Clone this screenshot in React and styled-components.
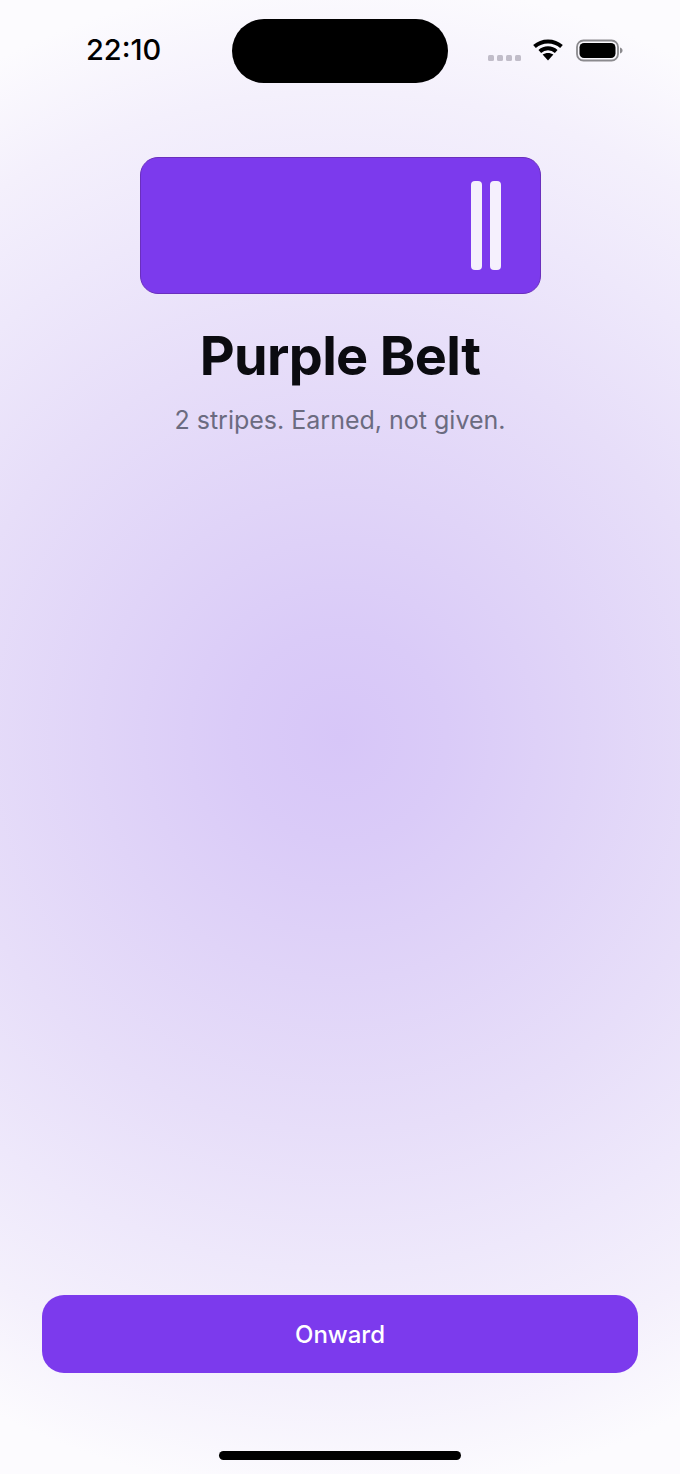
import React from "react";
import styled, { createGlobalStyle } from "styled-components";

const Global = createGlobalStyle`
  html, body { margin: 0; padding: 0; }
  body { font-family: Inter, "Liberation Sans", sans-serif; }
`;

const Screen = styled.div`
  width: 680px;
  height: 1474px;
  overflow: hidden;
  display: flex;
  flex-direction: column;
  align-items: center;
  background: radial-gradient(circle 760px at 340px 737px, #d7c6f8 0%, #dacbf8 14%, #e0d4f8 32%, #e7def9 52%, #eee8fb 70%, #f4f0fc 85%, #fcfbfe 100%);
`;

const StatusBar = styled.div`
  width: 100%;
  box-sizing: border-box;
  height: 83px;
  padding-top: 19px;
  display: grid;
  grid-template-columns: 232px 216px 232px;
`;

const Time = styled.div`
  font-size: 29px;
  font-weight: 550;
  line-height: 36px;
  margin-top: 13px;
  margin-left: 86px;
  color: #000;
`;

const Island = styled.div`
  height: 64px;
  border-radius: 32px;
  background: #000;
`;

const StatusIcons = styled.div`
  display: flex;
  align-items: flex-start;
  padding-left: 40px;
  padding-top: 20px;
`;

const Signal = styled.div`
  display: flex;
  gap: 3px;
  margin-top: 16px;
  margin-right: 12px;
`;

const SignalDot = styled.span`
  width: 6px;
  height: 6px;
  border-radius: 1.5px;
  background: #c1bdc9;
`;

const Belt = styled.div`
  margin-top: 74px;
  width: 401px;
  height: 137px;
  box-sizing: border-box;
  border: 1px solid #6a2fbd;
  border-radius: 18px;
  background: #7c3aed;
  display: flex;
  justify-content: flex-end;
  align-items: center;
  gap: 8px;
  padding-right: 39px;
`;

const Stripe = styled.span`
  width: 11px;
  height: 89px;
  border-radius: 4px;
  background: #f5f0fd;
`;

const Title = styled.h1`
  margin: 28px 0 0;
  font-size: 54px;
  line-height: 68px;
  font-weight: 700;
  color: #0b0b10;
  letter-spacing: -0.65px;
`;

const Subtitle = styled.p`
  margin: 14px 0 0;
  font-size: 25px;
  line-height: 32px;
  font-weight: 400;
  color: #6b6b80;
`;

const Spacer = styled.div`
  flex: 1;
`;

const PrimaryButton = styled.button`
  width: 596px;
  height: 78px;
  border: none;
  border-radius: 22px;
  background: #7c3aed;
  color: #fff;
  font-family: inherit;
  font-size: 24px;
  font-weight: 550;
  padding: 0;
`;

const HomeBar = styled.div`
  margin-top: 78px;
  margin-bottom: 14px;
  width: 242px;
  height: 9px;
  border-radius: 5px;
  background: #000;
`;

export default function App() {
  return (
    <Screen>
      <Global />
      <StatusBar>
        <Time>22:10</Time>
        <Island />
        <StatusIcons>
          <Signal>
            <SignalDot />
            <SignalDot />
            <SignalDot />
            <SignalDot />
          </Signal>
          <svg width="30" height="22" viewBox="0 0 30 22" style={{ display: "block" }}>
            <path d="M1.5 7.5C9 0.7 21 0.7 28.5 7.5" fill="none" stroke="#000" strokeWidth="4" />
            <path d="M6.8 12.5C11.5 8.3 18.5 8.3 23.2 12.5" fill="none" stroke="#000" strokeWidth="4" />
            <path d="M15 21.5L9.6 15.6C12.6 13.3 17.4 13.3 20.4 15.6Z" fill="#000" />
          </svg>
          <svg width="48" height="24" viewBox="0 0 48 24" style={{ display: "block", marginLeft: 13 }}>
            <rect x="1" y="1.5" width="41" height="20" rx="6.5" fill="none" stroke="#8b8a8e" strokeWidth="1.8" />
            <rect x="3.5" y="4" width="36" height="15" rx="4.5" fill="#000" />
            <path d="M44 8.5C45.8 9 46.5 10.2 46.5 11.5S45.8 14 44 14.5Z" fill="#8b8a8e" />
          </svg>
        </StatusIcons>
      </StatusBar>
      <Belt>
        <Stripe />
        <Stripe />
      </Belt>
      <Title>Purple Belt</Title>
      <Subtitle>2 stripes. Earned, not given.</Subtitle>
      <Spacer />
      <PrimaryButton>Onward</PrimaryButton>
      <HomeBar />
    </Screen>
  );
}
